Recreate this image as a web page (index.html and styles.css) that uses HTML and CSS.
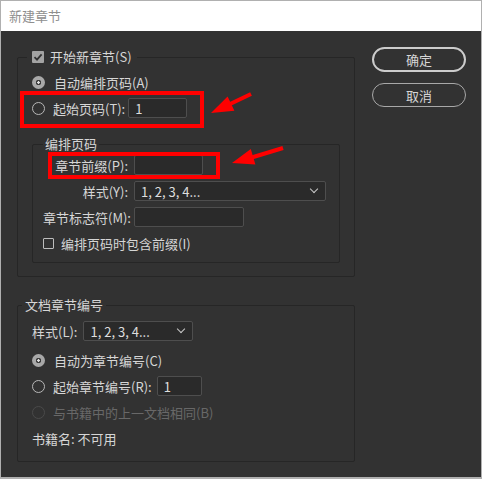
FILE: index.html
```html
<!DOCTYPE html>
<html lang="zh-CN">
<head>
  <meta charset="UTF-8">
  <title>新建章节</title>
  <link rel="stylesheet" href="styles.css">
</head>
<body>
  <div class="window">
    <div class="titlebar">新建章节</div>

    <div class="dialog">
      <div class="main">
        <fieldset class="group group-section">
          <legend><span class="check checked"></span>开始新章节(S)</legend>

          <div class="row"><span class="radio on"></span>自动编排页码(A)</div>
          <div class="row"><span class="radio"></span>起始页码(T):<span class="field w-start">1</span></div>

          <fieldset class="group inner">
            <legend>编排页码</legend>
            <div class="row">
              <span class="lbl">章节前缀(P):</span>
              <span class="field w-prefix"></span>
            </div>
            <div class="row">
              <span class="lbl">样式(Y):</span>
              <span class="field select w-style">1, 2, 3, 4...<span class="chevron"></span></span>
            </div>
            <div class="row">
              <span class="lbl">章节标志符(M):</span>
              <span class="field w-marker"></span>
            </div>
            <div class="row"><span class="check"></span>编排页码时包含前缀(I)</div>
          </fieldset>
        </fieldset>

        <fieldset class="group group-doc">
          <legend>文档章节编号</legend>
          <div class="row row-style">
            样式(L):<span class="field select w-docstyle">1, 2, 3, 4...<span class="chevron"></span></span>
          </div>
          <div class="row"><span class="radio on"></span>自动为章节编号(C)</div>
          <div class="row"><span class="radio"></span>起始章节编号(R):<span class="field w-num">1</span></div>
          <div class="row disabled"><span class="radio"></span>与书籍中的上一文档相同(B)</div>
          <div class="row">书籍名: 不可用</div>
        </fieldset>
      </div>

      <div class="buttons">
        <button class="btn primary">确定</button>
        <button class="btn">取消</button>
      </div>
    </div>

    <!-- red annotations drawn over the dialog -->
    <svg class="marks" width="482" height="479" viewBox="0 0 482 479">
      <rect x="22" y="93" width="180" height="33" fill="none" stroke="#ff0000" stroke-width="4"/>
      <rect x="50" y="154" width="168" height="23" fill="none" stroke="#ff0000" stroke-width="4"/>
      <line x1="251" y1="94" x2="228" y2="105" stroke="#ff0000" stroke-width="4"/>
      <polygon points="211,113 234.4,110.8 227.6,96.4" fill="#ff0000"/>
      <line x1="283" y1="148" x2="250" y2="158" stroke="#ff0000" stroke-width="4"/>
      <polygon points="232,163 255.4,164.4 250.8,149" fill="#ff0000"/>
    </svg>
  </div>
</body>
</html>
```

FILE: styles.css
```css
html * {
  font-family: "Noto Sans CJK SC", "Noto Sans", sans-serif;
  box-sizing: border-box;
}

body {
  margin: 0;
  background: #c8c8c8;
}

.window {
  position: relative;
  width: 482px;
  height: 479px;
  border: 1px solid #b0b0b0;
  border-bottom-width: 2px;
  background: #323232;
  color: #d6d6d6;
  font-size: 13px;
  overflow: hidden;
}

.titlebar {
  height: 30px;
  background: #fff;
  color: #8e8e8e;
  line-height: 30px;
  padding-left: 8px;
}

.dialog {
  display: flex;
  align-items: flex-start;
  gap: 17px;
  padding-left: 16px;
}

.main {
  width: 338px;
  margin-top: 18px;
}

/* group boxes */
.group {
  margin: 0;
  min-width: 0;
  border: 1px solid #262626;
  border-radius: 2px;
}

.group legend {
  display: flex;
  align-items: center;
  height: 16px;
  line-height: 16px;
}

.group-section {
  padding: 4px 14px 13px 14px;
}

.group-section > legend {
  padding: 0 5px;
  margin-left: -5px;
}

.group-section > legend .check {
  margin-right: 6px;
}

.inner {
  margin-top: 15px;
  padding: 0 10px 6px 10px;
}

.inner legend {
  padding: 0 2px;
}

.group-doc {
  margin-top: 20px;
  padding: 5px 14px 10px 14px;
}

.group-doc legend {
  padding: 0 3px;
  margin-left: -10px;
}

.row {
  display: flex;
  align-items: center;
  height: 26px;
  white-space: nowrap;
}

.row-style {
  margin-bottom: 3px;
}

.row.disabled {
  color: #686868;
}

.lbl {
  width: 85px;
  text-align: right;
  margin-right: 6px;
}

/* radios and checks */
.radio {
  width: 13px;
  height: 13px;
  border-radius: 50%;
  border: 1.5px solid #b8b8b8;
  margin-right: 8px;
  flex-shrink: 0;
}

.radio.on {
  border: none;
  background: radial-gradient(circle, #e0e0e0 0 1px, #3c3c3c 1.5px 2.5px, #a8a8a8 3px);
  margin-right: 9px;
}

.disabled .radio {
  border-color: #4a4a4a;
}

.check {
  width: 11px;
  height: 11px;
  border: 1px solid #bdbdbd;
  border-radius: 1px;
  margin-right: 7px;
  flex-shrink: 0;
}

.check.checked {
  width: 12px;
  height: 12px;
  border: none;
  background: #a3a3a3 url("data:image/svg+xml;utf8,<svg xmlns='http://www.w3.org/2000/svg' width='12' height='12'><path d='M2.5 6.2 L5 8.6 L9.6 3.4' fill='none' stroke='%23323232' stroke-width='1.8'/></svg>") no-repeat;
}

/* fields */
.field {
  display: flex;
  align-items: center;
  height: 20px;
  background: #2a2a2a;
  border: 1px solid #4e4e4e;
  border-radius: 2px;
  padding-left: 6px;
  color: #dedede;
}

.w-start {
  width: 59px;
  margin-left: 3px;
}

.w-prefix {
  width: 69px;
}

.w-style {
  width: 192px;
}

.w-marker {
  width: 110px;
}

.w-docstyle {
  width: 110px;
  margin-left: 6px;
}

.w-num {
  width: 45px;
  margin-left: 5px;
}

.select {
  justify-content: space-between;
  padding-right: 8px;
}

.chevron {
  width: 6px;
  height: 6px;
  border-right: 1.3px solid #c8c8c8;
  border-bottom: 1.3px solid #c8c8c8;
  transform: rotate(45deg);
  margin-top: -4px;
}

/* buttons */
.buttons {
  display: flex;
  flex-direction: column;
  gap: 11px;
  margin-top: 16px;
}

.btn {
  width: 94px;
  height: 24px;
  border: 1px solid #a8a8a8;
  border-radius: 12px;
  background: transparent;
  color: #d6d6d6;
  font-size: 13px;
  padding: 0;
}

.btn.primary {
  height: 25px;
  border: 2px solid #cccccc;
  border-radius: 13px;
}

.marks {
  position: absolute;
  top: -1px;
  left: -1px;
  pointer-events: none;
}
```
